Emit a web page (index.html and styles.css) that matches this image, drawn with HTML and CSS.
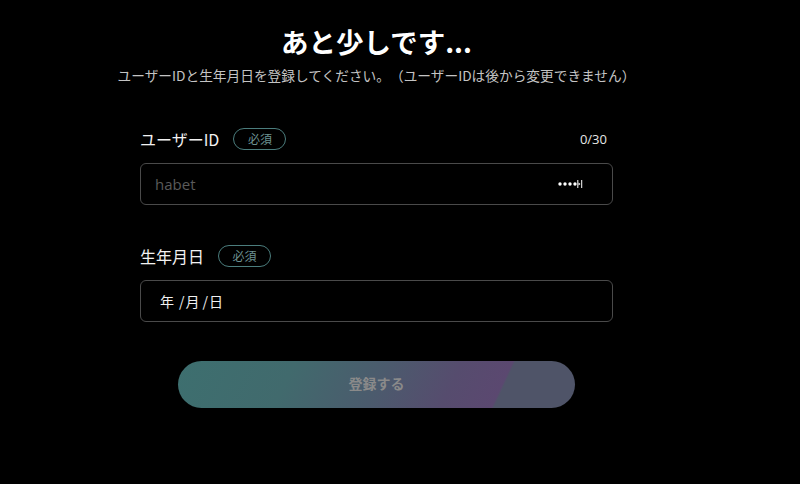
FILE: index.html
```html
<!DOCTYPE html>
<html lang="ja">
<head>
    <meta charset="UTF-8">
    <meta name="viewport" content="width=device-width, initial-scale=1.0">
    <title>あと少しです</title>
    <link rel="stylesheet" href="styles.css">
</head>
<body>

    <main class="page">
        <h1 class="title">あと少しです...</h1>
        <p class="lead">ユーザーIDと生年月日を登録してください。（ユーザーIDは後から変更できません）</p>

        <form class="form">
            <div class="field">
                <div class="field-head">
                    <label for="userId">ユーザーID</label>
                    <span class="badge">必須</span>
                    <span class="count">0/30</span>
                </div>
                <div class="input-box">
                    <input type="text" id="userId" placeholder="habet">
                    <svg class="pw-icon" width="26" height="8" viewBox="0 0 26 8">
                        <circle cx="2" cy="4" r="1.7" fill="#fff"/>
                        <circle cx="7" cy="4" r="1.7" fill="#fff"/>
                        <circle cx="12" cy="4" r="1.7" fill="#fff"/>
                        <circle cx="17" cy="4" r="1.7" fill="#fff"/>
                        <rect x="19.3" y="0" width="1" height="8" fill="#fff"/>
                        <path d="M20.5 2.5 L22.5 4 L20.5 5.5 Z" fill="#fff"/>
                        <rect x="23.2" y="0" width="1" height="8" fill="#fff"/>
                    </svg>
                </div>
            </div>

            <div class="field">
                <div class="field-head">
                    <label for="birth">生年月日</label>
                    <span class="badge">必須</span>
                </div>
                <div class="input-box date-box" id="birth">
                    <span>年</span><span class="sep">/</span><span>月</span><span class="sep">/</span><span>日</span>
                </div>
            </div>

            <button type="button" class="submit" disabled>登録する</button>
        </form>
    </main>

</body>
</html>
```

FILE: styles.css
```css
body {
    font-family: "Noto Sans CJK JP", "Noto Sans", sans-serif;
    background-color: #000;
    color: #fff;
    margin: 0;
}

.page {
    width: 753px;
    display: flex;
    flex-direction: column;
    align-items: center;
}

.title {
    margin: 23px 0 0;
    font-size: 27.5px;
    line-height: 36px;
    font-weight: 700;
}

.lead {
    margin: 6px 0 0;
    font-size: 13.7px;
    line-height: 20px;
    color: #c4c4c4;
    text-spacing-trim: space-all;
}

.form {
    width: 473px;
    margin-top: 43px;
    display: flex;
    flex-direction: column;
    align-items: center;
}

.field {
    width: 100%;
    margin-bottom: 40px;
}

.field:nth-child(2) {
    margin-bottom: 39px;
}

.field-head {
    display: flex;
    align-items: center;
    height: 22px;
    margin-bottom: 13px;
}

.field-head label {
    font-size: 16px;
    color: #f2f2f2;
    margin-right: 14px;
}

.badge {
    box-sizing: border-box;
    height: 22px;
    width: 53px;
    border: 1px solid #4b7d7d;
    border-radius: 11px;
    font-size: 12px;
    line-height: 20px;
    text-align: center;
    color: #6d9292;
}

.count {
    margin-left: auto;
    margin-right: 6px;
    font-family: "Open Sans", sans-serif;
    font-size: 13px;
    color: #e6e6e6;
}

.input-box {
    box-sizing: border-box;
    height: 42px;
    border: 1px solid #4a4a4a;
    border-radius: 6px;
    display: flex;
    align-items: center;
    padding: 0 30px 0 14px;
}

.input-box input {
    flex: 1;
    border: none;
    outline: none;
    background: transparent;
    color: #fff;
    font-family: "Open Sans", sans-serif;
    font-size: 15px;
    padding: 0;
}

.input-box input::placeholder {
    color: #5a5a5a;
}

.pw-icon {
    display: block;
    margin-right: -2px;
}

.date-box {
    padding-left: 19px;
    font-size: 14px;
    color: #f0f0f0;
}

.date-box .sep {
    margin: 0 1px 0 3px;
}

.date-box span:first-child {
    margin-right: 2px;
}

.submit {
    width: 397px;
    height: 47px;
    padding: 0 0 3px;
    border: none;
    border-radius: 24px;
    background: linear-gradient(115deg, #3d6f6f 0%, #416a6d 28%, #4b5b6d 50%, #564c6e 68%, #5b4870 80%, #4f5468 80.6%, #4f5468 100%);
    color: #8a8a8a;
    font-family: "Noto Sans CJK JP", sans-serif;
    font-size: 14px;
    font-weight: 700;
    cursor: default;
}
```
